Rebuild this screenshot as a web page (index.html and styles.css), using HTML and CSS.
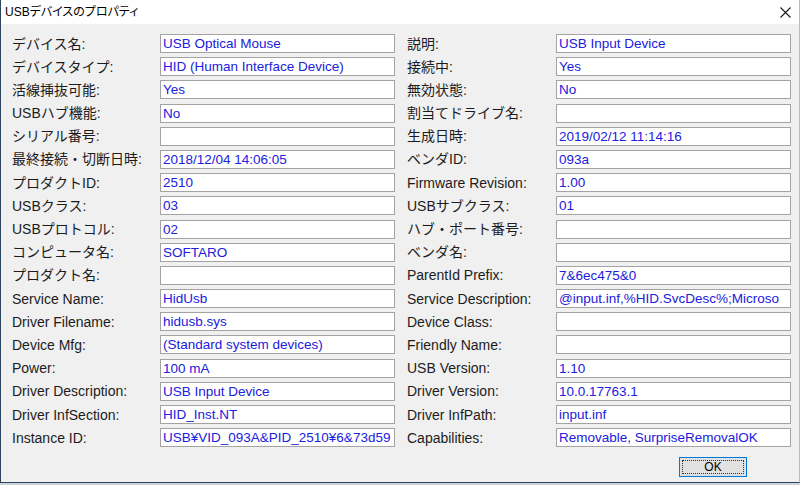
FILE: index.html
```html
<!DOCTYPE html>
<html lang="ja">
<head>
<meta charset="utf-8">
<title>USBデバイスのプロパティ</title>
<link rel="stylesheet" href="styles.css">
</head>
<body>
<div class="window">
  <div class="titlebar">
    <span class="title">USBデバイスのプロパティ</span>
    <span class="close">
      <svg width="11" height="11" viewBox="0 0 11 11"><path d="M0.5 0.5 L10.5 10.5 M10.5 0.5 L0.5 10.5" stroke="#1a1a1a" stroke-width="1.1" fill="none"/></svg>
    </span>
  </div>
  <div class="content">
    <div class="grid">
      <div class="lbl">デバイス名:</div><div class="fld">USB Optical Mouse</div>
      <div class="lbl">説明:</div><div class="fld">USB Input Device</div>

      <div class="lbl">デバイスタイプ:</div><div class="fld">HID (Human Interface Device)</div>
      <div class="lbl">接続中:</div><div class="fld">Yes</div>

      <div class="lbl">活線挿抜可能:</div><div class="fld">Yes</div>
      <div class="lbl">無効状態:</div><div class="fld">No</div>

      <div class="lbl">USBハブ機能:</div><div class="fld">No</div>
      <div class="lbl">割当てドライブ名:</div><div class="fld"></div>

      <div class="lbl">シリアル番号:</div><div class="fld"></div>
      <div class="lbl">生成日時:</div><div class="fld">2019/02/12 11:14:16</div>

      <div class="lbl">最終接続・切断日時:</div><div class="fld">2018/12/04 14:06:05</div>
      <div class="lbl">ベンダID:</div><div class="fld">093a</div>

      <div class="lbl">プロダクトID:</div><div class="fld">2510</div>
      <div class="lbl">Firmware Revision:</div><div class="fld">1.00</div>

      <div class="lbl">USBクラス:</div><div class="fld">03</div>
      <div class="lbl">USBサブクラス:</div><div class="fld">01</div>

      <div class="lbl">USBプロトコル:</div><div class="fld">02</div>
      <div class="lbl">ハブ・ポート番号:</div><div class="fld"></div>

      <div class="lbl">コンピュータ名:</div><div class="fld">SOFTARO</div>
      <div class="lbl">ベンダ名:</div><div class="fld"></div>

      <div class="lbl">プロダクト名:</div><div class="fld"></div>
      <div class="lbl">ParentId Prefix:</div><div class="fld">7&amp;6ec475&amp;0</div>

      <div class="lbl">Service Name:</div><div class="fld">HidUsb</div>
      <div class="lbl">Service Description:</div><div class="fld">@input.inf,%HID.SvcDesc%;Microso</div>

      <div class="lbl">Driver Filename:</div><div class="fld">hidusb.sys</div>
      <div class="lbl">Device Class:</div><div class="fld"></div>

      <div class="lbl">Device Mfg:</div><div class="fld">(Standard system devices)</div>
      <div class="lbl">Friendly Name:</div><div class="fld"></div>

      <div class="lbl">Power:</div><div class="fld">100 mA</div>
      <div class="lbl">USB Version:</div><div class="fld">1.10</div>

      <div class="lbl">Driver Description:</div><div class="fld">USB Input Device</div>
      <div class="lbl">Driver Version:</div><div class="fld">10.0.17763.1</div>

      <div class="lbl">Driver InfSection:</div><div class="fld">HID_Inst.NT</div>
      <div class="lbl">Driver InfPath:</div><div class="fld">input.inf</div>

      <div class="lbl">Instance ID:</div><div class="fld">USB¥VID_093A&amp;PID_2510¥6&amp;73d59</div>
      <div class="lbl">Capabilities:</div><div class="fld">Removable, SurpriseRemovalOK</div>
    </div>
    <div class="footer">
      <button class="btn"><span class="focus">OK</span></button>
    </div>
  </div>
</div>
</body>
</html>
```

FILE: styles.css
```css
html, body {
  margin: 0;
  padding: 0;
  background: #cfd3d8;
}
body {
  width: 800px;
  height: 485px;
  overflow: hidden;
  font-family: "Liberation Sans", "Noto Sans CJK JP", sans-serif;
}
.window {
  box-sizing: border-box;
  width: 800px;
  height: 483px;
  background: #f0f0f0;
  border-left: 1px solid #2e4560;
  border-right: 1px solid #b9bcc0;
  border-bottom: 1px solid #2e4560;
  display: flex;
  flex-direction: column;
}
.titlebar {
  height: 24px;
  background: #ffffff;
  display: flex;
  align-items: center;
  justify-content: space-between;
  padding-left: 4px;
  padding-right: 8px;
  flex: none;
}
.title {
  font-size: 12px;
  color: #000;
  font-feature-settings: "palt";
  line-height: 1;
}
.close {
  display: flex;
  align-items: center;
  height: 11px;
  margin-top: 1px;
}
.content {
  padding-top: 10px;
  flex: 1;
}
.grid {
  display: grid;
  grid-template-columns: 148px 235px 161px 235px;
  grid-auto-rows: 19px;
  row-gap: 4.2px;
  padding-left: 11px;
}
.grid > .lbl:nth-child(4n+3) {
  padding-left: 12px;
}
.lbl {
  font-size: 14px;
  color: #1c1c1c;
  display: flex;
  align-items: center;
  white-space: nowrap;
  line-height: 1;
}
.fld {
  box-sizing: border-box;
  background: #ffffff;
  border: 1px solid #a3a3a3;
  color: #2020dc;
  font-size: 13.5px;
  line-height: 17px;
  padding-left: 2px;
  white-space: nowrap;
  overflow: hidden;
}
.footer {
  display: flex;
  justify-content: flex-end;
  padding-top: 9.6px;
  padding-right: 52px;
}
.btn {
  box-sizing: border-box;
  width: 68px;
  height: 20px;
  padding: 2px;
  margin: 0;
  background: #e1e1e1;
  border: 1px solid #0078d7;
  font-family: "Liberation Sans", "Noto Sans CJK JP", sans-serif;
  font-size: 12px;
  color: #000;
  display: flex;
}
.focus {
  flex: 1;
  border: 1px dotted #333;
  display: flex;
  align-items: center;
  justify-content: center;
  line-height: 1;
}
```
